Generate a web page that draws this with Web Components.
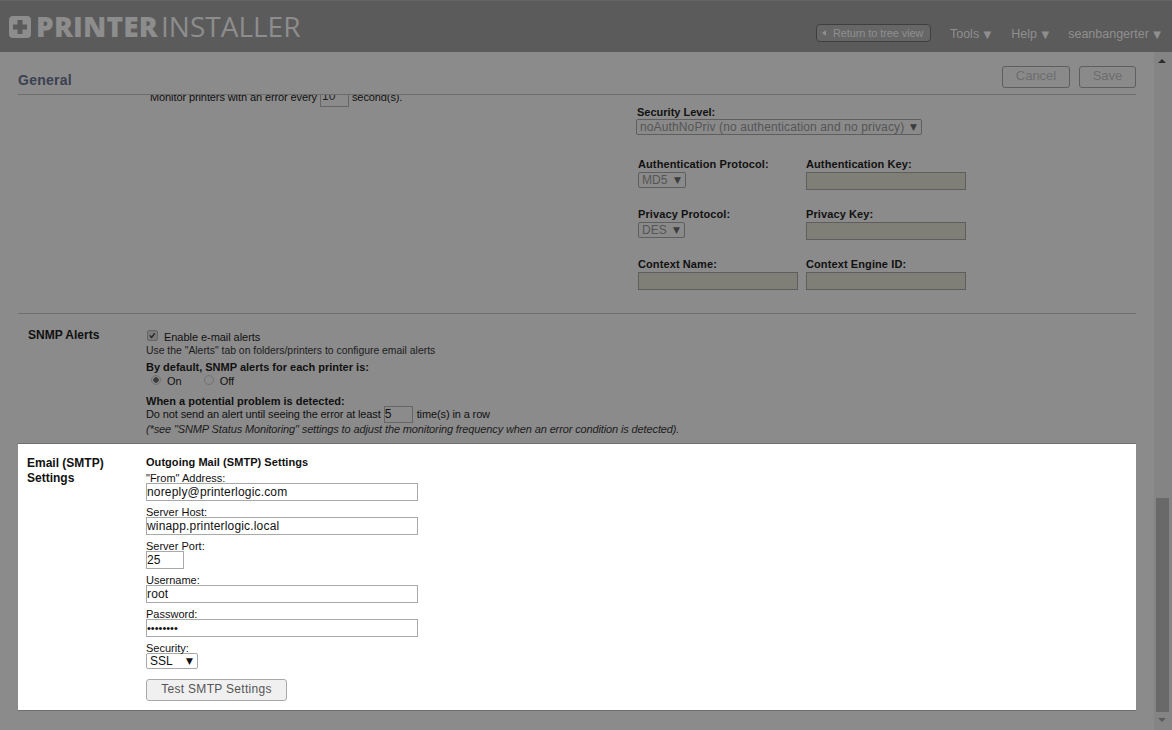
<!DOCTYPE html>
<html lang="en">
<head>
<meta charset="utf-8">
<title>Printer Installer - General</title>
<style>
  html, body { margin: 0; height: 100%; overflow: hidden; }
  body { background: #8b8b8b; color: #111; font: 11px "Liberation Sans", Arial, sans-serif; }
</style>
</head>
<body>
<app-shell>
  <top-bar slot="top" user="seanbangerter"></top-bar>
  <title-bar slot="title" heading="General"></title-bar>

  <dim-section>
    <snmp-security></snmp-security>
  </dim-section>

  <dim-section heading="SNMP Alerts">
    <snmp-alerts></snmp-alerts>
  </dim-section>

  <lit-section heading="Email (SMTP) Settings">
    <smtp-form></smtp-form>
  </lit-section>
</app-shell>

<script>
// shared look of the form controls
const controlCss = `
  .box { box-sizing: border-box; display: block; height: 18px; border: 1px solid #a9a9a9; background: #fff;
         padding: 0; font: 12px/16px "Liberation Sans", Arial, sans-serif; letter-spacing: .17px; color: #111; white-space: nowrap; overflow: hidden; }
  .sel { box-sizing: border-box; display: inline-flex; justify-content: space-between; align-items: center; height: 16px; border: 1px solid #a9a9a9; border-radius: 2px;
         background: #fff; padding: 0 4px 0 3px; font: 12px/14px "Liberation Sans", Arial, sans-serif; color: #111; white-space: nowrap; }
  .sel i { font: 9px "DejaVu Sans", sans-serif; margin-left: 5px; }
  .dim.box { border-color: #5e5e5e; background: #7f7f78; }
  .dim.sel { border-color: #5e5e5e; background: #8a8a8a; color: #555; }
  .dim.sel i { color: #3c3c3c; }
  .lbl { display: block; height: 13px; font: 11px/13px "Liberation Sans", Arial, sans-serif; color: #111; white-space: nowrap; }
  .b { font-weight: bold; }
`;

class AppShell extends HTMLElement {
  constructor() {
    super();
    this.attachShadow({ mode: "open" });
    this.shadowRoot.innerHTML = `
      <style>
        :host { display: flex; flex-direction: column; height: 730px; }
        .body { flex: 1; display: flex; min-height: 0; }
        .main { flex: 1; display: flex; flex-direction: column; padding: 0 18px 0 18px; min-width: 0; }
        .scroll { height: 616px; overflow: hidden; }
        .bar { width: 18px; background: #848484; position: relative; }
        .up, .down { width: 0; height: 0; border-left: 4px solid transparent; border-right: 4px solid transparent; position: absolute; left: 4px; }
        .up { top: 7px; border-bottom: 4px solid #2c2c2c; }
        .down { bottom: 8px; border-top: 4px solid #5a5a5a; }
        .thumb { position: absolute; left: 2px; width: 13px; top: 446px; height: 214px; background: #696969; }
      </style>
      <slot name="top"></slot>
      <div class="body">
        <div class="main">
          <slot name="title"></slot>
          <div class="scroll"><slot></slot></div>
        </div>
        <div class="bar"><span class="up"></span><span class="thumb"></span><span class="down"></span></div>
      </div>`;
  }
}

class TopBar extends HTMLElement {
  constructor() {
    super();
    this.attachShadow({ mode: "open" });
    const user = this.getAttribute("user");
    this.shadowRoot.innerHTML = `
      <style>
        :host { display: flex; align-items: center; height: 52px; background: #5b5b5b; box-sizing: border-box; border-top: 1px solid #666; color: #8f8f8f; }
        .logo { display: flex; align-items: center; margin: -2px 0 0 9px; font: 28px/34px "Open Sans", sans-serif; color: #8d8d8d; }
        .logo svg { display: block; margin: 2px 5px 0 0; }
        .logo b { font-weight: 800; letter-spacing: .2px; }
        .logo span { font-weight: 400; margin-left: 3px; letter-spacing: 0; }
        nav { margin-left: auto; display: flex; align-items: center; font: 12.5px/16px "Liberation Sans", Arial, sans-serif; padding: 15px 11px 0 0; }
        .back { box-sizing: border-box; width: 115px; height: 18px; margin: 0 19px 2px 0; border: 1px solid #3f3f3f; border-radius: 4px; background: #666; color: #8f8f8f;
                font: 11px/16px "Liberation Sans", Arial, sans-serif; letter-spacing: -.1px; display: flex; align-items: center; padding-left: 5px; }
        .back i { width: 0; height: 0; border-top: 3px solid transparent; border-bottom: 3px solid transparent; border-right: 4px solid #8f8f8f; margin-right: 7px; }
        a { white-space: nowrap; }
        a i { font: 10px "DejaVu Sans", sans-serif; margin-left: 1px; }
        .t { margin-right: 20px; }
        .h { margin-right: 19px; }
      </style>
      <div class="logo">
        <svg width="22" height="22" viewBox="0 0 22 22"><path fill="#8d8d8d" fill-rule="evenodd" d="M4 0h14a4 4 0 0 1 4 4v14a4 4 0 0 1-4 4H4a4 4 0 0 1-4-4V4a4 4 0 0 1 4-4zM8.500 4v4.500H4v5h4.500V18h5v-4.500H18v-5h-4.500V4z"/></svg>
        <b>PRINTER</b><span>INSTALLER</span>
      </div>
      <nav>
        <div class="back"><i></i>Return to tree view</div>
        <a class="t">Tools <i>▼</i></a>
        <a class="h">Help <i>▼</i></a>
        <a>${user} <i>▼</i></a>
      </nav>`;
  }
}

class TitleBar extends HTMLElement {
  constructor() {
    super();
    this.attachShadow({ mode: "open" });
    this.shadowRoot.innerHTML = `
      <style>
        :host { display: flex; align-items: center; box-sizing: border-box; height: 43px; border-bottom: 1px solid #6c6c6c; }
        h2 { margin: 13px 0 0; font: bold 14px/18px "Liberation Sans", Arial, sans-serif; letter-spacing: .25px; color: #3b4150; }
        .btns { margin-left: auto; display: flex; gap: 9px; align-self: flex-start; padding-top: 14px; }
        button { box-sizing: border-box; height: 22px; border: 1px solid #5e5e5e; border-radius: 3px; background: #8a8a8a; color: #6d6d6d; font: 13px/18px "Liberation Sans", Arial, sans-serif; padding: 0 0 3px; }
        .c { width: 68px; } .s { width: 57px; }
      </style>
      <h2>${this.getAttribute("heading")}</h2>
      <div class="btns"><button class="c">Cancel</button><button class="s">Save</button></div>`;
  }
}

class DimSection extends HTMLElement {
  constructor() {
    super();
    this.attachShadow({ mode: "open" });
    const h = this.getAttribute("heading");
    this.shadowRoot.innerHTML = `
      <style>
        :host { display: grid; grid-template-columns: 128px 1fr; box-sizing: border-box; border-bottom: 1px solid #6f6f6f; }
        h3 { margin: 14px 0 0 10px; font: bold 12px/14px "Liberation Sans", Arial, sans-serif; color: #111; }
        :host(:not([heading])) { display: block; }
      </style>
      ${h ? `<h3>${h}</h3>` : ""}<slot></slot>`;
  }
}

class LitSection extends HTMLElement {
  constructor() {
    super();
    this.attachShadow({ mode: "open" });
    this.shadowRoot.innerHTML = `
      <style>
        :host { display: grid; grid-template-columns: 128px 1fr; box-sizing: border-box; height: 267px; background: #fff; border-bottom: 1px solid #6f6f6f; }
        h3 { margin: 12px 20px 0 9px; font: bold 12px/15px "Liberation Sans", Arial, sans-serif; color: #111; }
      </style>
      <h3>${this.getAttribute("heading")}</h3><slot></slot>`;
  }
}

class SnmpSecurity extends HTMLElement {
  constructor() {
    super();
    this.attachShadow({ mode: "open" });
    this.shadowRoot.innerHTML = `
      <style>${controlCss}
        :host { display: grid; grid-template-columns: 620px 1fr; height: 218px; font: 11px/13px "Liberation Sans", Arial, sans-serif; }
        .monitor { margin-top: -9px; padding-left: 132px; display: flex; align-items: center; height: 21px; gap: 3px; letter-spacing: -.1px; }
        .monitor > span { margin-top: 2px; }
        .monitor .box { width: 29px; height: 21px; margin: 0; font-size: 12px; line-height: 19px; padding-left: 1px; letter-spacing: 0; background: #8b8b8b; border-color: #666; color: #222; }
        .right { padding-top: 11px; }
        .level { margin-left: -2px; }
        .level .lbl { margin-left: 1px; }
        .level .sel { width: 286px; letter-spacing: .13px; }
        .grid { display: grid; grid-template-columns: 168px 160px; row-gap: 18px; margin-top: 23px; align-items: start; }
        .grid .lbl { height: 14px; letter-spacing: .1px; }
        .in { width: 160px; }
        .grid > div { height: 32px; }
        .sel { display: flex; width: max-content; }
      </style>
      <div class="monitor"><span>Monitor printers with an error every</span><span class="box">10</span><span>second(s).</span></div>
      <div class="right">
        <div class="level"><span class="lbl b">Security Level:</span><span class="sel dim">noAuthNoPriv (no authentication and no privacy) <i>▼</i></span></div>
        <div class="grid">
          <div><span class="lbl b">Authentication Protocol:</span><span class="sel dim" style="width:48px">MD5 <i>▼</i></span></div>
          <div><span class="lbl b">Authentication Key:</span><span class="box dim in"></span></div>
          <div><span class="lbl b">Privacy Protocol:</span><span class="sel dim" style="width:47px">DES <i>▼</i></span></div>
          <div><span class="lbl b">Privacy Key:</span><span class="box dim in"></span></div>
          <div><span class="lbl b">Context Name:</span><span class="box dim in"></span></div>
          <div><span class="lbl b">Context Engine ID:</span><span class="box dim in"></span></div>
        </div>
      </div>`;
  }
}

class SnmpAlerts extends HTMLElement {
  constructor() {
    super();
    this.attachShadow({ mode: "open" });
    this.shadowRoot.innerHTML = `
      <style>${controlCss}
        :host { display: block; height: 129px; box-sizing: border-box; padding-top: 17px; font: 11px/13px "Liberation Sans", Arial, sans-serif; color: #111; }
        .en { display: flex; align-items: center; height: 13px; letter-spacing: -.05px; }
        .chk { box-sizing: border-box; width: 11px; height: 11px; margin: 0 6px 0 1px; border: 1px solid #666; border-radius: 2px; background: #7a7a7a; display: block; position: relative; top: -2px; }
        .small { font-size: 10.4px; color: #1c1c1c; height: 13px; }
        .head { font-weight: bold; }
        .radios { display: flex; align-items: center; height: 14px; padding-left: 5px; }
        .r { box-sizing: border-box; width: 10px; height: 10px; border: 1px solid #727272; border-radius: 50%; background: #8b8b8b; margin-right: 6px; display: block; position: relative; top: -1px; }
        .r.on { background: radial-gradient(circle, #3c3c3c 0 2.500px, #8b8b8b 3px); }
        .off { margin-left: 22px; }
        .line { display: flex; align-items: center; height: 17px; letter-spacing: -.12px; }
        .line .box { width: 29px; height: 17px; line-height: 15px; margin: 0 4px 0 3px; background: #8b8b8b; border-color: #666; letter-spacing: 0; }
        .note { font-style: italic; color: #1c1c1c; letter-spacing: -.125px; }
      </style>
      <div class="en"><svg class="chk" viewBox="0 0 11 11"><path d="M2.200 5.300l2.200 2.500 3.800-5" fill="none" stroke="#222" stroke-width="1.600"/></svg>Enable e-mail alerts</div>
      <div class="small">Use the "Alerts" tab on folders/printers to configure email alerts</div>
      <div class="head" style="margin-top:4px">By default, SNMP alerts for each printer is:</div>
      <div class="radios"><span class="r on"></span>On<span class="r off"></span>Off</div>
      <div class="head" style="margin-top:7px">When a potential problem is detected:</div>
      <div class="line" style="margin-top:-2px">Do not send an alert until seeing the error at least<span class="box">5</span>time(s) in a row</div>
      <div class="note">(*see "SNMP Status Monitoring" settings to adjust the monitoring frequency when an error condition is detected).</div>`;
  }
}

class SmtpField extends HTMLElement {
  constructor() {
    super();
    this.attachShadow({ mode: "open" });
    const w = this.getAttribute("width") || "272";
    this.shadowRoot.innerHTML = `
      <style>${controlCss}
        :host { display: block; margin-bottom: 3px; }
        .box { width: ${w}px; }
        .lbl { line-height: 17px; }
      </style>
      <span class="lbl">${this.getAttribute("label")}</span>
      <div class="box"><slot></slot></div>`;
  }
}

class SmtpForm extends HTMLElement {
  constructor() {
    super();
    this.attachShadow({ mode: "open" });
    this.shadowRoot.innerHTML = `
      <style>${controlCss}
        :host { display: block; padding-top: 12px; }
        h4 { margin: 0; height: 14px; font: bold 11px/13px "Liberation Sans", Arial, sans-serif; letter-spacing: .05px; color: #111; }
        .lbl { line-height: 17px; }
        .sel { display: flex; width: 52px; }
        .sel i { font-size: 9px; }
        button { box-sizing: border-box; display: block; width: 141px; height: 22px; margin-top: 10px; border: 1px solid #a9a9a9; border-radius: 3px; background: #f0f0f0; color: #555; font: 12px "Liberation Sans", Arial, sans-serif; letter-spacing: .3px; padding: 0 0 2px; }
      </style>
      <h4>Outgoing Mail (SMTP) Settings</h4>
      <slot></slot>
      <span class="lbl">Security:</span>
      <span class="sel">SSL <i>▼</i></span>
      <button>Test SMTP Settings</button>`;
    this.innerHTML = `
      <smtp-field label="&quot;From&quot; Address:">noreply@printerlogic.com</smtp-field>
      <smtp-field label="Server Host:">winapp.printerlogic.local</smtp-field>
      <smtp-field label="Server Port:" width="38">25</smtp-field>
      <smtp-field label="Username:">root</smtp-field>
      <smtp-field label="Password:"><span style="font-size:11px;letter-spacing:0">••••••••</span></smtp-field>`;
  }
}

customElements.define("app-shell", AppShell);
customElements.define("top-bar", TopBar);
customElements.define("title-bar", TitleBar);
customElements.define("dim-section", DimSection);
customElements.define("lit-section", LitSection);
customElements.define("snmp-security", SnmpSecurity);
customElements.define("snmp-alerts", SnmpAlerts);
customElements.define("smtp-field", SmtpField);
customElements.define("smtp-form", SmtpForm);
</script>
</body>
</html>
